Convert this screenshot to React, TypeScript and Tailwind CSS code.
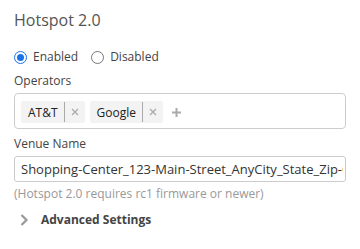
import React from 'react';

const Radio = ({ checked, label }: { checked: boolean; label: string }) => (
  <label className="flex items-center gap-[6px] cursor-pointer">
    {checked ? (
      <span className="w-[13px] h-[13px] rounded-full border-[1.5px] border-[#1a73e8] flex items-center justify-center bg-white">
        <span className="w-[7px] h-[7px] rounded-full bg-[#1a73e8]" />
      </span>
    ) : (
      <span className="w-[13px] h-[13px] rounded-full border border-[#767676] bg-white" />
    )}
    <span className="text-[12px] leading-[20px] text-[#444]">{label}</span>
  </label>
);

const Tag = ({ name }: { name: string }) => (
  <div className="flex items-stretch h-[22px] bg-[#f3f3f3] rounded-[2px]">
    <span className="pl-[7px] pr-[6px] text-[12px] leading-[22px] text-[#222] border-r border-[#aaa] my-[1px]">
      {name}
    </span>
    <span className="w-[20px] flex items-center justify-center">
      <svg width="8" height="8" viewBox="0 0 8 8">
        <path d="M1 1L7 7M7 1L1 7" stroke="#aaa" strokeWidth="1.3" />
      </svg>
    </span>
  </div>
);

export default function App() {
  return (
    <div
      className="w-[360px] h-[249px] bg-white px-[14px] overflow-hidden"
      style={{ fontFamily: '"Open Sans", sans-serif' }}
    >
      <h2 className="mt-[9px] text-[16px] leading-[22px] text-[#555] font-normal">Hotspot 2.0</h2>

      <div className="mt-[16px] h-[20px] flex items-center gap-[13px]">
        <Radio checked label="Enabled" />
        <Radio checked={false} label="Disabled" />
      </div>

      <div className="mt-[6px] text-[12px] leading-[16px] text-[#444]">Operators</div>
      <div className="mt-[4px] w-[332px] h-[36px] border border-[#ccc] rounded-[4px] flex items-start pt-[7px] pl-[6px] gap-[5px]">
        <Tag name="AT&T" />
        <Tag name="Google" />
        <span className="ml-[4px] h-[22px] flex items-center">
          <svg width="9" height="9" viewBox="0 0 9 9">
            <path d="M4.5 0V9M0 4.5H9" stroke="#aaa" strokeWidth="2" />
          </svg>
        </span>
      </div>

      <div className="mt-[7px] text-[12px] leading-[16px] text-[#444]">Venue Name</div>
      <input
        readOnly
        value="Shopping-Center_123-Main-Street_AnyCity_State_Zip-Code"
        className="mt-[4px] block w-[332px] h-[26px] border border-[#ccc] rounded-[3px] pl-[6px] pr-[2px] text-[13px] text-[#333] outline-none"
        style={{ fontFamily: '"Open Sans", sans-serif' }}
      />

      <div className="mt-[4px] text-[12px] leading-[16px] text-[#999]">
        (Hotspot 2.0 requires rc1 firmware or newer)
      </div>

      <div className="mt-[10px] flex items-center h-[16px]">
        <svg width="14" height="14" viewBox="0 0 14 14" className="ml-[3px]">
          <path d="M4.5 2L9.5 7L4.5 12" stroke="#999" strokeWidth="2.2" fill="none" />
        </svg>
        <span className="ml-[10px] text-[12px] leading-[16px] font-bold text-[#444]">Advanced Settings</span>
      </div>
    </div>
  );
}
